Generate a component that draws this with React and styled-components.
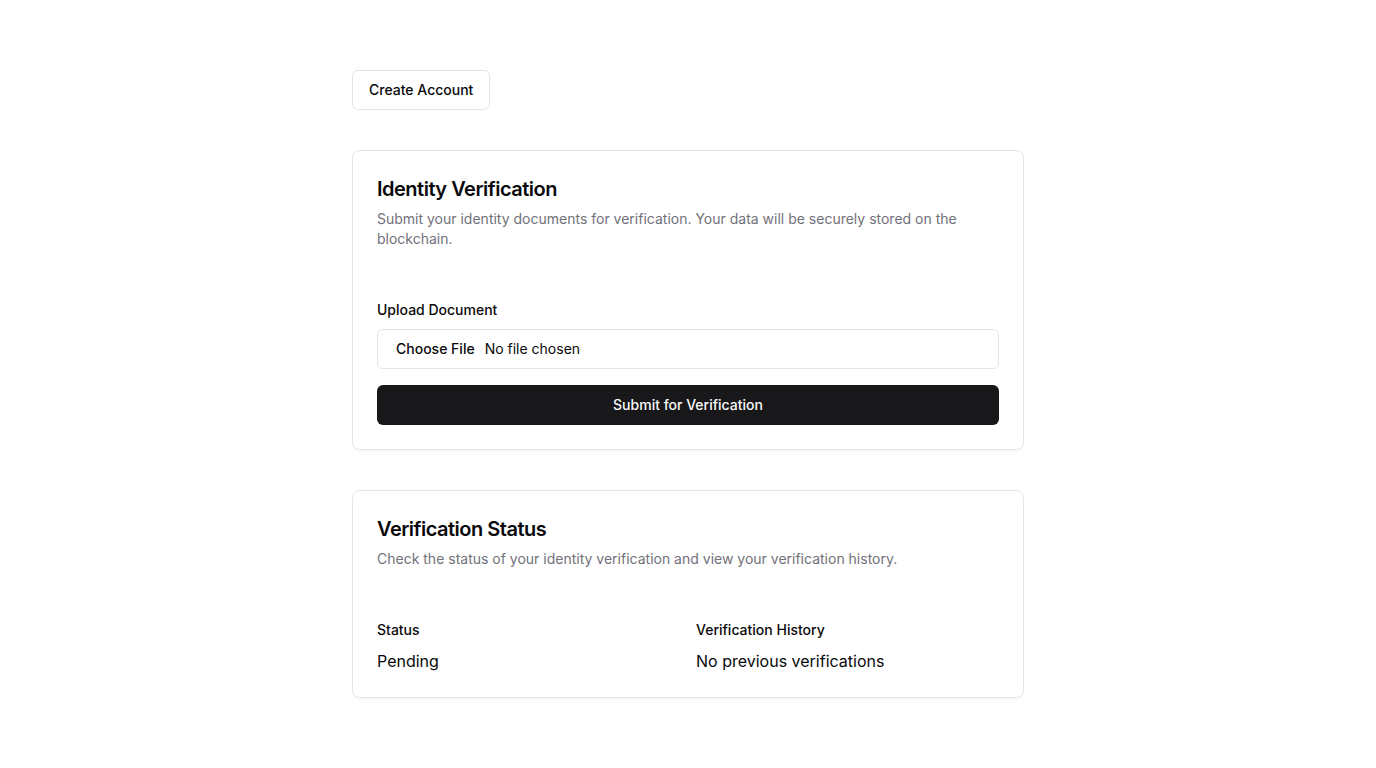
import styled, { createGlobalStyle } from "styled-components";

const GlobalStyle = createGlobalStyle`
  * {
    box-sizing: border-box;
  }
  body {
    margin: 0;
    background: #ffffff;
    font-family: Inter, "Noto Sans", sans-serif;
    color: #09090b;
  }
`;

const Page = styled.main`
  width: 672px;
  margin: 0 auto;
  padding: 70px 0 40px;
  display: flex;
  flex-direction: column;
  align-items: flex-start;
  gap: 40px;
`;

const OutlineButton = styled.button`
  height: 40px;
  padding: 0 16px 1px;
  border: 1px solid #e4e4e7;
  border-radius: 6px;
  background: #ffffff;
  font-family: inherit;
  font-size: 14px;
  font-weight: 500;
  color: #09090b;
  cursor: pointer;
`;

const Card = styled.section`
  width: 100%;
  border: 1px solid #e4e4e7;
  border-radius: 8px;
  background: #ffffff;
  box-shadow: 0 1px 2px rgba(0, 0, 0, 0.05);
`;

const CardHeader = styled.div`
  padding: 24px;
  display: flex;
  flex-direction: column;
  gap: 6px;
`;

const CardTitle = styled.h2`
  margin: 0;
  font-size: 20px;
  line-height: 28px;
  font-weight: 600;
  letter-spacing: -0.5px;
`;

const CardDescription = styled.p`
  margin: 0;
  font-size: 14px;
  line-height: 20px;
  color: #71717a;
`;

const CardContent = styled.div`
  padding: 27px 24px 24px;
  display: flex;
  flex-direction: column;
  gap: 16px;
`;

const Field = styled.div`
  display: flex;
  flex-direction: column;
  gap: 9px;
`;

const Label = styled.label`
  font-size: 14px;
  line-height: 20px;
  font-weight: 500;
`;

const FileBox = styled.label`
  height: 40px;
  display: flex;
  align-items: center;
  padding: 0 12px 1px;
  border: 1px solid #e4e4e7;
  border-radius: 6px;
  font-size: 14px;
  cursor: pointer;

  input {
    display: none;
  }
`;

const FileButton = styled.span`
  padding: 0 6px;
  margin-right: 4px;
  font-weight: 500;
`;

const PrimaryButton = styled.button`
  height: 40px;
  width: 100%;
  padding: 0 0 1px;
  border: none;
  border-radius: 6px;
  background: #18181b;
  color: #fafafa;
  font-family: inherit;
  font-size: 14px;
  font-weight: 500;
  cursor: pointer;
`;

const InfoGrid = styled.div`
  display: grid;
  grid-template-columns: 1fr 1fr;
  gap: 16px;
`;

const Value = styled.p`
  margin: 0;
  font-size: 16px;
  line-height: 24px;
`;

export default function App() {
  return (
    <>
      <GlobalStyle />
      <Page>
        <OutlineButton>Create Account</OutlineButton>

        <Card>
          <CardHeader>
            <CardTitle>Identity Verification</CardTitle>
            <CardDescription>
              Submit your identity documents for verification. Your data will be
              securely stored on the blockchain.
            </CardDescription>
          </CardHeader>
          <CardContent>
            <Field>
              <Label htmlFor="doc">Upload Document</Label>
              <FileBox>
                <input id="doc" type="file" />
                <FileButton>Choose File</FileButton>
                <span>No file chosen</span>
              </FileBox>
            </Field>
            <PrimaryButton>Submit for Verification</PrimaryButton>
          </CardContent>
        </Card>

        <Card>
          <CardHeader>
            <CardTitle>Verification Status</CardTitle>
            <CardDescription>
              Check the status of your identity verification and view your
              verification history.
            </CardDescription>
          </CardHeader>
          <CardContent>
            <InfoGrid>
              <Field>
                <Label>Status</Label>
                <Value>Pending</Value>
              </Field>
              <Field>
                <Label>Verification History</Label>
                <Value>No previous verifications</Value>
              </Field>
            </InfoGrid>
          </CardContent>
        </Card>
      </Page>
    </>
  );
}
